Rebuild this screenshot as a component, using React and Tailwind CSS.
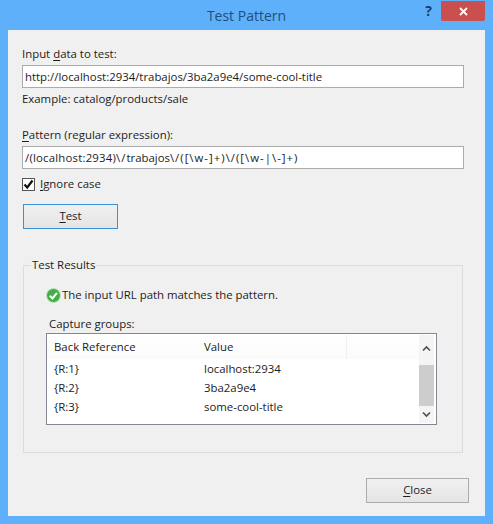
import React from "react";

const font = { fontFamily: '"Open Sans", "Noto Sans", sans-serif' };

function Key({ children }) {
  return <span className="underline underline-offset-2">{children}</span>;
}

function Row({ a, b }) {
  return (
    <div className="flex h-[19px] items-center">
      <span className="w-[150px] pl-[7px]">{a}</span>
      <span className="pl-[7px]">{b}</span>
    </div>
  );
}

export default function App() {
  return (
    <div
      className="flex h-[524px] w-[493px] flex-col overflow-hidden bg-[#5fb0fa] px-[8px] pb-[8px] text-[11.4px] leading-[16px] text-[#1c1c1c]"
      style={font}
    >
      {/* title bar */}
      <div className="relative flex h-[30px] shrink-0 items-center justify-center pt-[1px] text-[14px] text-[#1d4f7c]">
        Test Pattern
        <span className="absolute right-[53px] top-[3px] text-[14px] font-bold text-[#123f6c]">?</span>
        <div className="absolute right-[0px] top-[1px] flex h-[20px] w-[44px] items-center justify-center rounded-b-[2px] bg-[#c9504c]">
          <svg width="9" height="9" viewBox="0 0 9 9">
            <path d="M1 1l7 7M8 1L1 8" stroke="#fff" strokeWidth="1.8" fill="none" />
          </svg>
        </div>
      </div>

      {/* body */}
      <div className="flex flex-1 flex-col bg-[#f0f0f0] pl-[14px] pr-[15px] pt-[16px]">
        <label className="h-[19px]">
          Input <Key>d</Key>ata to test:
        </label>
        <div className="flex h-[23px] w-[442px] items-center border border-[#ababab] bg-white px-[2px]">
          http://localhost:2934/trabajos/3ba2a9e4/some-cool-title
        </div>
        <p className="mt-[3px] h-[16px]">Example: catalog/products/sale</p>

        <label className="mt-[20px] h-[19px]">
          <Key>P</Key>attern (regular expression):
        </label>
        <div className="flex h-[23px] w-[442px] items-center border border-[#ababab] bg-white px-[2px]">
          <span className="tracking-[0.2px]">/(localhost:2934)</span>
          <span className="tracking-[1px]">{"\\/"}</span>
          <span>trabajos</span>
          <span className="tracking-[1px]">{"\\/([\\w-]+)\\/([\\w-|\\-]+)"}</span>
        </div>

        <div className="mt-[9px] flex h-[13px] items-center gap-[5px]">
          <div className="flex h-[13px] w-[13px] items-center justify-center border border-[#555] bg-white">
            <svg width="11" height="11" viewBox="0 0 11 11">
              <path d="M1.5 5.5L4.2 8.5L9.5 1.5" stroke="#111" strokeWidth="2.2" fill="none" />
            </svg>
          </div>
          <span className="-mt-[1px]">
            <Key>I</Key>gnore case
          </span>
        </div>

        <button className="ml-[1px] mt-[13px] h-[25px] w-[95px] border border-[#3c8fd0] bg-linear-to-b from-[#f0f0f0] to-[#e5e5e5] pb-[2px]">
          <Key>T</Key>est
        </button>

        {/* group box */}
        <fieldset className="ml-[1px] mt-[28px] h-[196px] w-[440px] border border-[#dcdcdc]">
          <legend className="ml-[7px] px-[1px]">Test Results</legend>
          <div className="pl-[22px]">
            <div className="mt-[14px] flex h-[16px] items-center gap-[1px]">
              <svg width="15" height="15" viewBox="0 0 15 15">
                <circle cx="7.5" cy="7.5" r="7" fill="#45ad45" stroke="#c4e3bf" />
                <path d="M3.8 7.8L6.4 10.4L11 4.8" stroke="#fff" strokeWidth="2" fill="none" />
              </svg>
              <span>The input URL path matches the pattern.</span>
            </div>
            <p className="mt-[13px] ml-[3px] h-[17px]">Capture groups:</p>

            <div className="flex h-[92px] w-[391px] border border-[#828790] bg-white">
              <div className="flex-1">
                <div className="flex h-[25px] items-center bg-linear-to-b from-white to-[#fbfbfb] pt-[1px]">
                  <span className="w-[150px] pl-[7px]">Back Reference</span>
                  <span className="w-[150px] border-r border-[#f0f0f0] pl-[7px] leading-[24px]">Value</span>
                </div>
                <div>
                  <Row a="{R:1}" b="localhost:2934" />
                  <Row a="{R:2}" b="3ba2a9e4" />
                  <Row a="{R:3}" b="some-cool-title" />
                </div>
              </div>
              {/* scrollbar */}
              <div className="my-[1px] mr-[2px] flex w-[15px] flex-col bg-[#f4f4f4]">
                <div className="flex h-[30px] items-center justify-center pb-[3px]">
                  <svg width="9" height="7" viewBox="0 0 9 7">
                    <path d="M1 5.5L4.5 2L8 5.5" stroke="#505050" strokeWidth="1.7" fill="none" />
                  </svg>
                </div>
                <div className="h-[41px] bg-[#cdcdcd]" />
                <div className="flex flex-1 items-center justify-center">
                  <svg width="9" height="7" viewBox="0 0 9 7">
                    <path d="M1 1.5L4.5 5L8 1.5" stroke="#505050" strokeWidth="1.7" fill="none" />
                  </svg>
                </div>
              </div>
            </div>
          </div>
        </fieldset>

        <div className="mt-[25px] flex justify-end">
          <button className="mr-[1px] h-[25px] w-[103px] border border-[#acacac] bg-linear-to-b from-[#f0f0f0] to-[#e5e5e5] pb-[2px]">
            <Key>C</Key>lose
          </button>
        </div>
      </div>
    </div>
  );
}
